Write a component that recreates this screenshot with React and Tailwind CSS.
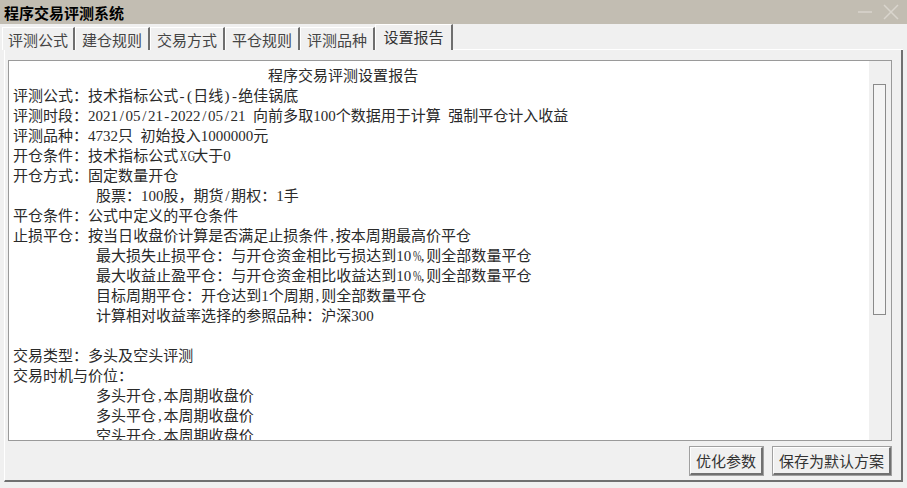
const tabs = ["评测公式", "建仓规则", "交易方式", "平仓规则", "评测品种", "设置报告"];

const lines = [
  { t: "程序交易评测设置报告", indent: "pl-[255px]" },
  { t: "评测公式：技术指标公式-(日线)-绝佳锅底" },
  { t: "评测时段：2021/05/21-2022/05/21 向前多取100个数据用于计算 强制平仓计入收益" },
  { t: "评测品种：4732只 初始投入1000000元" },
  { t: "开仓条件：技术指标公式XG大于0" },
  { t: "开仓方式：固定数量开仓" },
  { t: "股票：100股，期货/期权：1手", indent: "pl-[83px]" },
  { t: "平仓条件：公式中定义的平仓条件" },
  { t: "止损平仓：按当日收盘价计算是否满足止损条件,按本周期最高价平仓" },
  { t: "最大损失止损平仓：与开仓资金相比亏损达到10%,则全部数量平仓", indent: "pl-[83px]" },
  { t: "最大收益止盈平仓：与开仓资金相比收益达到10%,则全部数量平仓", indent: "pl-[83px]" },
  { t: "目标周期平仓：开仓达到1个周期,则全部数量平仓", indent: "pl-[83px]" },
  { t: "计算相对收益率选择的参照品种：沪深300", indent: "pl-[83px]" },
  { t: "" },
  { t: "交易类型：多头及空头评测" },
  { t: "交易时机与价位：" },
  { t: "多头开仓,本周期收盘价", indent: "pl-[83px]" },
  { t: "多头平仓,本周期收盘价", indent: "pl-[83px]" },
  { t: "空头开仓,本周期收盘价", indent: "pl-[83px]" },
];

// half-width chars take a fixed 7.5px cell, like the bitmap font in the original
function Line({ text }) {
  return [...text].map((ch, i) => {
    if (ch.charCodeAt(0) >= 128) return <span key={i}>{ch}</span>;
    const wide = /[A-Z%]/.test(ch);
    return (
      <span key={i} className="inline-block w-[7.5px] text-center">
        {wide ? (
          <span className="inline-block scale-x-[0.68]">{ch}</span>
        ) : ch === " " ? (
          "\u00a0"
        ) : (
          ch
        )}
      </span>
    );
  });
}

const btn =
  "h-[28px] px-[5px] bg-[#f0f0f0] border border-[#fdfdfd] border-r-2 border-b-2 border-r-[#707070] border-b-[#707070] outline outline-1 outline-[#a0a0a0] text-[15px] text-[#333] leading-none";

export default function App() {
  return (
    <div
      className="w-[907px] h-[488px] bg-[#f0f0f0] flex flex-col overflow-hidden text-[#222]"
      style={{ fontFamily: '"Liberation Serif", "Noto Sans CJK SC", serif' }}
    >
      {/* title bar */}
      <div className="h-[24px] bg-[#c2bdb2] flex items-center justify-between pl-[4px] pr-[8px] shrink-0">
        <span
          className="text-[15px] font-bold text-black leading-none"
          style={{ fontFamily: '"Noto Sans CJK SC", sans-serif' }}
        >
          程序交易评测系统
        </span>
        <div className="flex items-center gap-[10px]">
          <svg width="16" height="16" viewBox="0 0 16 16">
            <line x1="1" y1="8" x2="15" y2="8" stroke="#d9d5cd" strokeWidth="1.5" />
          </svg>
          <svg width="16" height="16" viewBox="0 0 16 16">
            <line x1="1" y1="1" x2="15" y2="15" stroke="#d9d5cd" strokeWidth="1.5" />
            <line x1="15" y1="1" x2="1" y2="15" stroke="#d9d5cd" strokeWidth="1.5" />
          </svg>
        </div>
      </div>

      {/* tabs */}
      <div className="h-[26px] flex items-end pl-[2px] shrink-0">
        {tabs.map((tab, i) => {
          const active = i === tabs.length - 1;
          const w = i === 0 ? "w-[73px]" : active ? "w-[78px]" : "w-[75px]";
          return (
            <div
              key={tab}
              className={
                active
                  ? `${w} h-[26px] flex items-start justify-center pt-[3px] border-t border-l border-white border-r-2 border-r-[#6e6e6e] bg-[#f0f0f0] text-[15px] leading-[18px] text-[#333]`
                  : `${w} h-[23px] flex items-center justify-center border-t border-l border-white border-r-2 border-r-[#6e6e6e] text-[15px] leading-none text-[#444]`
              }
              style={{ fontFamily: '"Noto Sans CJK SC", sans-serif' }}
            >
              {tab}
            </div>
          );
        })}
        <div className="flex-1 h-full border-b border-white mr-[4px]" />
      </div>

      {/* panel */}
      <div className="ml-[4px] mr-[4px] h-[432px] border-l border-white border-r-2 border-r-[#707070] border-b-2 border-b-[#707070] flex flex-col shrink-0">
        <div className="mt-[10px] ml-[3px] w-[884px] h-[381px] border border-[#9a9a9a] bg-white flex overflow-hidden">
          <div className="flex-1 pt-[5px] pl-[4px] overflow-hidden text-[15px] leading-[20px] text-[#2a2a2a] whitespace-nowrap">
            {lines.map((l, i) => (
              <div key={i} className={`h-[20px] ${l.indent || ""}`}>
                <Line text={l.t} />
              </div>
            ))}
          </div>
          <div className="w-[22px] bg-[#f0f0f0] shrink-0 pt-[23px] pl-[4px]">
            <div className="w-[13px] h-[231px] border border-[#8a8a8a] bg-[#f4f4f4]" />
          </div>
        </div>
        <div className="flex-1 flex items-center justify-end gap-[10px] pr-[10px]">
          <button className={btn} style={{ fontFamily: '"Noto Sans CJK SC", sans-serif' }}>
            优化参数
          </button>
          <button className={btn} style={{ fontFamily: '"Noto Sans CJK SC", sans-serif' }}>
            保存为默认方案
          </button>
        </div>
      </div>
    </div>
  );
}
